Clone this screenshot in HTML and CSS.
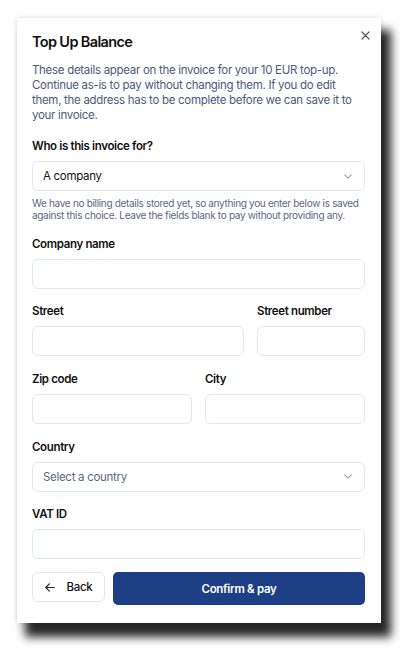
FILE: index.html
```html
<!DOCTYPE html>
<html>
<head>
<meta charset="utf-8">
<link rel="stylesheet" href="styles.css">
</head>
<body>
<div class="modal">
  <button class="close" aria-label="Close">
    <svg width="9" height="9" viewBox="0 0 9 9"><path d="M1 1L8 8M8 1L1 8" stroke="#555" stroke-width="1.2" stroke-linecap="round"/></svg>
  </button>
  <h1 class="title">Top Up Balance</h1>
  <p class="desc">These details appear on the invoice for your 10 EUR top-up. Continue as-is to pay without changing them. If you do edit them, the address has to be complete before we can save it to your invoice.</p>

  <div class="field">
    <label class="label">Who is this invoice for?</label>
    <div class="select">
      <span class="select-value">A company</span>
      <svg class="chev" width="8" height="5" viewBox="0 0 8 5"><path d="M0.7 0.8l3.3 3.3 3.3-3.3" fill="none" stroke="#94a3b8" stroke-width="1.1" stroke-linecap="round" stroke-linejoin="round"/></svg>
    </div>
    <p class="help">We have no billing details stored yet, so anything you enter below is saved against this choice. Leave the fields blank to pay without providing any.</p>
  </div>

  <div class="field">
    <label class="label">Company name</label>
    <div class="input"></div>
  </div>

  <div class="row row-street">
    <div class="field">
      <label class="label">Street</label>
      <div class="input"></div>
    </div>
    <div class="field">
      <label class="label">Street number</label>
      <div class="input"></div>
    </div>
  </div>

  <div class="row row-half">
    <div class="field">
      <label class="label">Zip code</label>
      <div class="input"></div>
    </div>
    <div class="field">
      <label class="label">City</label>
      <div class="input"></div>
    </div>
  </div>

  <div class="field">
    <label class="label">Country</label>
    <div class="select">
      <span class="select-placeholder">Select a country</span>
      <svg class="chev" width="8" height="5" viewBox="0 0 8 5"><path d="M0.7 0.8l3.3 3.3 3.3-3.3" fill="none" stroke="#94a3b8" stroke-width="1.1" stroke-linecap="round" stroke-linejoin="round"/></svg>
    </div>
  </div>

  <div class="field field-last">
    <label class="label">VAT ID</label>
    <div class="input"></div>
  </div>

  <div class="actions">
    <button class="btn-back">
      <svg width="10" height="9" viewBox="0 0 10 9"><path d="M9.3 4.5H0.9M4.3 0.9L0.8 4.5 4.3 8.1" fill="none" stroke="#1f2937" stroke-width="1.2" stroke-linecap="round" stroke-linejoin="round"/></svg>
      <span>Back</span>
    </button>
    <button class="btn-confirm">Confirm &amp; pay</button>
  </div>
</div>
</body>
</html>
```
FILE: styles.css
```css
* { box-sizing: border-box; }
html, body { margin: 0; padding: 0; background: #fff; }
body {
  font-family: Inter, "Noto Sans", sans-serif;
  color: #111827;
  width: 400px;
  height: 652px;
  overflow: hidden;
}
.modal {
  position: relative;
  margin: 18px 0 0 17px;
  width: 364px;
  height: 605px;
  background: #fff;
  padding: 14px 16px 0 15px;
  box-shadow: 9px 13px 9px 1px rgba(0,0,0,0.85), 0 0 4px rgba(0,0,0,0.18);
}
.close {
  position: absolute;
  top: 10px;
  right: 9px;
  width: 14px;
  height: 14px;
  padding: 0;
  border: 0;
  background: none;
  display: flex;
  align-items: center;
  justify-content: center;
}
.title {
  margin: 0;
  font-size: 14.5px;
  line-height: 20px;
  font-weight: 600;
  letter-spacing: -0.65px;
  color: #111;
}
.desc {
  margin: 11px 0 15px;
  font-size: 11.5px;
  line-height: 15px;
  letter-spacing: -0.3px;
  color: #4b5a78;
}
.field { display: flex; flex-direction: column; margin-bottom: 14.7px; }
.field-last { margin-bottom: 12.9px; }
.label {
  font-size: 11.5px;
  line-height: 16px;
  font-weight: 600;
  letter-spacing: -0.35px;
  color: #111;
  margin-bottom: 7px;
}
.input, .select {
  height: 30px;
  border: 1px solid #e2e8f0;
  border-radius: 6px;
  background: #fff;
}
.select {
  display: flex;
  align-items: center;
  justify-content: space-between;
  padding: 0 12px 0 10px;
  font-size: 11.5px;
  letter-spacing: -0.3px;
}
.select-value { color: #111; }
.select-placeholder { color: #5b6882; }
.help {
  margin: 6px 0 0;
  font-size: 10px;
  line-height: 12px;
  letter-spacing: -0.32px;
  color: #5b6882;
}
.row { display: grid; column-gap: 13px; }
.row-street { grid-template-columns: 212px 108px; }
.row-half { grid-template-columns: 1fr 1fr; }
.actions {
  display: flex;
  gap: 8px;
  align-items: flex-start;
}
.btn-back {
  width: 73px;
  height: 30px;
  border: 1px solid #e2e8f0;
  border-radius: 6px;
  background: #fff;
  display: flex;
  align-items: center;
  justify-content: center;
  gap: 12px;
  font-family: inherit;
  font-size: 11.5px;
  font-weight: 500;
  letter-spacing: -0.3px;
  color: #111;
  padding: 0;
}
.btn-confirm {
  flex: 1;
  height: 33px;
  border: 0;
  border-radius: 5px;
  background: #1e3f85;
  color: #fff;
  font-family: inherit;
  font-size: 11.5px;
  font-weight: 600;
  letter-spacing: -0.3px;
}
```
